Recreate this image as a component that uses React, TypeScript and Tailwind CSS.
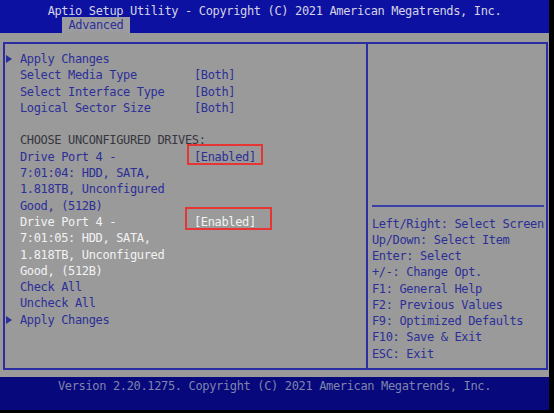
import React from 'react';

// Setup utility screen: "Advanced" page with drive list and key help
type Row = {
  label: string;
  value?: string;
  tone?: 'blue' | 'dark' | 'white';
  arrow?: boolean;
  box?: 'first' | 'second';
};

const rows: Row[] = [
  { label: 'Apply Changes', arrow: true },
  { label: 'Select Media Type', value: '[Both]' },
  { label: 'Select Interface Type', value: '[Both]' },
  { label: 'Logical Sector Size', value: '[Both]' },
  { label: '' },
  { label: 'CHOOSE UNCONFIGURED DRIVES:', tone: 'dark' },
  { label: 'Drive Port 4 -', value: '[Enabled]', box: 'first' },
  { label: '7:01:04: HDD, SATA,' },
  { label: '1.818TB, Unconfigured' },
  { label: 'Good, (512B)' },
  { label: 'Drive Port 4 -', value: '[Enabled]', tone: 'white', box: 'second' },
  { label: '7:01:05: HDD, SATA,', tone: 'white' },
  { label: '1.818TB, Unconfigured', tone: 'white' },
  { label: 'Good, (512B)', tone: 'white' },
  { label: 'Check All' },
  { label: 'Uncheck All' },
  { label: 'Apply Changes', arrow: true },
];

const help = [
  'Left/Right: Select Screen',
  'Up/Down: Select Item',
  'Enter: Select',
  '+/-: Change Opt.',
  'F1: General Help',
  'F2: Previous Values',
  'F9: Optimized Defaults',
  'F10: Save & Exit',
  'ESC: Exit',
];

const toneClass = {
  blue: 'text-[#2c2f98]',
  dark: 'text-[#363640]',
  white: 'text-[#f2f2f2]',
};

function Arrow() {
  return (
    <svg width="6" height="8" viewBox="0 0 6 8" className="fill-[#2c2f98]">
      <path d="M0 0 L6 4 L0 8 Z" />
    </svg>
  );
}

function MenuRow({ row }: { row: Row }) {
  const tone = toneClass[row.tone ?? 'blue'];
  return (
    <div className={`flex h-[16.3px] items-center whitespace-pre ${tone}`}>
      <div className="flex w-[15px] items-center pl-[1px]">{row.arrow && <Arrow />}</div>
      <div className="w-[174px]">{row.label}</div>
      {row.value && (
        <div className="relative">
          {row.value}
          {row.box === 'first' && (
            <div className="absolute -left-[7px] -top-[5px] h-[21px] w-[76px] border-2 border-[#e53535]" />
          )}
          {row.box === 'second' && (
            <div className="absolute -left-[9px] -top-[7px] h-[23px] w-[87px] border-2 border-[#e53535]" />
          )}
        </div>
      )}
    </div>
  );
}

export default function App() {
  return (
    <div
      className="h-[413px] w-[554px] overflow-hidden bg-black text-[12px] leading-[16.3px] tracking-[-0.35px]"
      style={{ fontFamily: '"DejaVu Sans Mono", "Liberation Mono", monospace' }}
    >
      <div className="flex h-[410px] w-[549px] flex-col">
        {/* Title bar and tab */}
        <div className="relative h-[33px] bg-[#0d11a2]">
          <div className="pt-[3px] text-center text-[#d4d4e4]">
            Aptio Setup Utility - Copyright (C) 2021 American Megatrends, Inc.
          </div>
          <div className="absolute bottom-0 left-[62px] flex h-[16px] w-[68px] items-center justify-center bg-[#9c9ca0] text-[#2c2f98]">
            Advanced
          </div>
        </div>

        {/* Main area */}
        <div className="bg-[#9a9a9a] pb-[7px] pl-[3px] pt-[9px]">
          <div className="flex h-[328px] w-[545px] border-2 border-[#2a2ea2]">
            <div className="w-[361px] pt-[7px]">
              {rows.map((r, i) => (
                <MenuRow key={i} row={r} />
              ))}
            </div>
            <div className="flex flex-1 flex-col border-l-2 border-[#2a2ea2]">
              <div className="h-[161px]" />
              <div className="ml-[4px] mr-[2px] h-[1.5px] bg-[#3a3eaa]" />
              <div className="mt-[9px] pl-[4px] text-[#2c2f98]">
                {help.map((h) => (
                  <div key={h} className="h-[16.25px] whitespace-pre">
                    {h}
                  </div>
                ))}
              </div>
            </div>
          </div>
        </div>

        {/* Version footer */}
        <div className="h-[33px] bg-[#07087c] pt-[1px] text-center text-[#7f84aa]">
          Version 2.20.1275. Copyright (C) 2021 American Megatrends, Inc.
        </div>
      </div>
    </div>
  );
}
